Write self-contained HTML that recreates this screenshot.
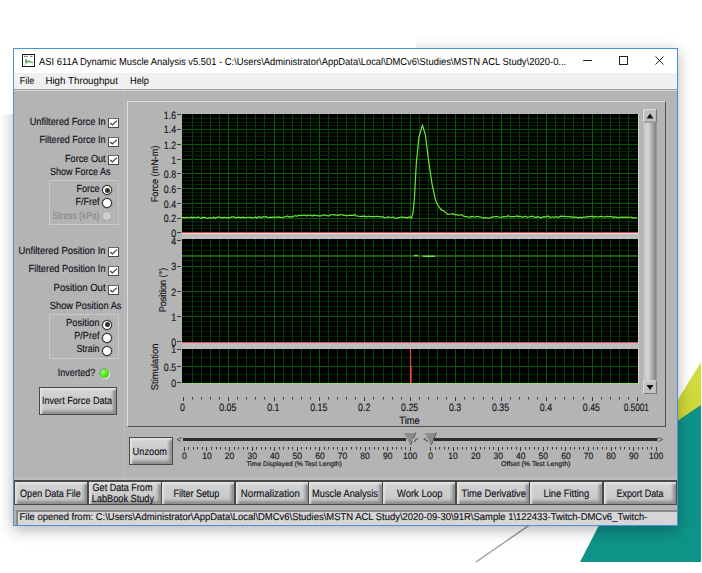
<!DOCTYPE html><html><head><meta charset="utf-8"><style>
html,body{margin:0;padding:0;}
body{width:702px;height:573px;position:relative;overflow:hidden;background:#fff;font-family:"Liberation Sans",sans-serif;color:#1a1a1a;}
.a{position:absolute;}
.t0{position:absolute;white-space:nowrap;line-height:1;text-rendering:geometricPrecision;}
.t{position:absolute;white-space:nowrap;line-height:1;text-rendering:geometricPrecision;-webkit-text-stroke:0.1px currentColor;}
.btn{position:absolute;box-sizing:border-box;border:1px solid #4a4a4a;background:linear-gradient(#d4d4d4,#c6c6c6);box-shadow:inset 2px 2px 2px #e2e2e2, inset -3px -3px 3px #8e8e8e;}
.cb{position:absolute;box-sizing:border-box;width:11px;height:10px;border:1px solid #4a4a4a;border-top-color:#6a6a6a;background:#fff;}
.rd{position:absolute;box-sizing:border-box;width:10px;height:10px;border-radius:50%;border:1px solid #2e2e2e;background:#fff;}
</style></head><body>
<svg class="a" style="left:0;top:0" width="702" height="573" viewBox="0 0 702 573">
<defs><linearGradient id="yg" x1="0" y1="0" x2="0" y2="1"><stop offset="0" stop-color="#d4dd40"/><stop offset="1" stop-color="#bed024"/></linearGradient></defs>
<polygon points="701,362 600,527 701,527" fill="url(#yg)"/>
<polygon points="701,405 640,446 580,562 701,562" fill="#0f9389"/>
<line x1="476" y1="562" x2="560" y2="504" stroke="#9a9a9a" stroke-width="1.4"/>
</svg>
<div class="a" style="left:13px;top:48px;width:665px;height:478px;box-shadow:0 4px 14px rgba(0,0,0,0.30);"></div>
<div class="a" style="left:0;top:0;width:13px;height:114px;background:#fff"></div>
<div class="a" style="left:0;top:0;width:416px;height:48px;background:#fff"></div>
<div class="a" style="left:13px;top:48px;width:665px;height:478px;box-sizing:border-box;border:1px solid #4a90da;background:#b4b4b4"></div>
<div class="a" style="left:14px;top:49px;width:663px;height:24px;background:#fff"></div>
<div class="a" style="left:14px;top:73px;width:663px;height:16px;background:#f0f0f0"></div>
<div class="a" style="left:14px;top:89px;width:663px;height:1px;background:#a2a2a2"></div>
<div class="a" style="left:14px;top:90px;width:663px;height:1px;background:#d6d6d6"></div>
<div class="a" style="left:22px;top:54px;width:13px;height:13px;box-sizing:border-box;border:1px solid #1a1a1a;background:#fff"></div>
<svg class="a" style="left:23px;top:55px" width="11" height="11"><rect x="1" y="0.8" width="1" height="1" fill="#333"/><rect x="2.7" y="0.8" width="2.3" height="1" fill="#555"/><rect x="7" y="0.8" width="2.5" height="1" fill="#666"/><rect x="2.3" y="4" width="1.5" height="4.2" fill="#2f9a3a"/><path d="M3.6 6.2 L5 6.8 L6.5 6.2 L8 7 L10 7.8" stroke="#3aa040" stroke-width="1.1" fill="none"/><path d="M1.2 10 L4 8.2" stroke="#9ad49a" stroke-width="0.8"/></svg>
<div class="a" style="left:583px;top:60px;width:9px;height:1px;background:#222"></div>
<div class="a" style="left:619px;top:56px;width:9px;height:9px;box-sizing:border-box;border:1px solid #222"></div>
<svg class="a" style="left:655px;top:56px" width="9" height="9"><path d="M0.5 0.5 L8.5 8.5 M8.5 0.5 L0.5 8.5" stroke="#222" stroke-width="1"/></svg>
<div class="a" style="left:124px;top:91px;width:1px;height:387px;background:#bdbdbd"></div>
<div class="cb" style="left:108px;top:118.0px"></div>
<svg class="a" style="left:108px;top:118.0px" width="11" height="10"><path d="M2.3 5 L4.3 7 L9 2.6" stroke="#3a3a3a" stroke-width="1.1" fill="none"/></svg>
<div class="cb" style="left:108px;top:136.8px"></div>
<svg class="a" style="left:108px;top:136.8px" width="11" height="10"><path d="M2.3 5 L4.3 7 L9 2.6" stroke="#3a3a3a" stroke-width="1.1" fill="none"/></svg>
<div class="cb" style="left:108px;top:155.2px"></div>
<svg class="a" style="left:108px;top:155.2px" width="11" height="10"><path d="M2.3 5 L4.3 7 L9 2.6" stroke="#3a3a3a" stroke-width="1.1" fill="none"/></svg>
<div class="cb" style="left:108px;top:247.2px"></div>
<svg class="a" style="left:108px;top:247.2px" width="11" height="10"><path d="M2.3 5 L4.3 7 L9 2.6" stroke="#3a3a3a" stroke-width="1.1" fill="none"/></svg>
<div class="cb" style="left:108px;top:265.9px"></div>
<svg class="a" style="left:108px;top:265.9px" width="11" height="10"><path d="M2.3 5 L4.3 7 L9 2.6" stroke="#3a3a3a" stroke-width="1.1" fill="none"/></svg>
<div class="cb" style="left:108px;top:284.6px"></div>
<svg class="a" style="left:108px;top:284.6px" width="11" height="10"><path d="M2.3 5 L4.3 7 L9 2.6" stroke="#3a3a3a" stroke-width="1.1" fill="none"/></svg>
<div class="a" style="left:49px;top:180px;width:70px;height:45px;box-sizing:border-box;border:1px solid #cacaca;border-right-color:#c4c4c4"></div>
<div class="a" style="left:49px;top:314px;width:70px;height:45px;box-sizing:border-box;border:1px solid #cacaca"></div>
<div class="rd" style="left:102px;top:185.0px;box-shadow:0 0 0 0.5px #777"></div>
<div class="a" style="left:104.5px;top:187.5px;width:5px;height:5px;border-radius:50%;background:#333"></div>
<div class="rd" style="left:102px;top:198.0px;box-shadow:0 0 0 0.5px #777"></div>
<div class="rd" style="left:102px;top:211.3px;border-color:#a8a8a8;background:#cfcfcf"></div>
<div class="rd" style="left:102px;top:319.5px;box-shadow:0 0 0 0.5px #777"></div>
<div class="a" style="left:104.5px;top:322.0px;width:5px;height:5px;border-radius:50%;background:#333"></div>
<div class="rd" style="left:102px;top:332.5px;box-shadow:0 0 0 0.5px #777"></div>
<div class="rd" style="left:102px;top:345.5px;box-shadow:0 0 0 0.5px #777"></div>
<div class="a" style="left:99.8px;top:369.4px;width:8.8px;height:8.8px;border-radius:50%;background:radial-gradient(circle at 35% 35%, #b0ff90 0%, #55f020 35%, #38c812 100%);box-shadow:-0.6px -0.6px 0.6px #777, 1px 1px 1px #eee"></div>
<div class="btn" style="left:38.5px;top:386.5px;width:78.5px;height:28.5px"></div>
<div class="a" style="left:127px;top:101px;width:539px;height:326px;box-sizing:border-box;border:1px solid #dedede;border-right-color:#4e4e4e;border-bottom-color:#4e4e4e"></div>
<svg class="a" style="left:0;top:0" width="702" height="573" viewBox="0 0 702 573"><rect x="182" y="233" width="457" height="6" fill="#bdbdbd"/><rect x="182" y="342" width="457" height="7" fill="#bdbdbd"/><rect x="182" y="114" width="456" height="119" fill="#000"/><line x1="638.5" x2="638.5" y1="114" y2="234" stroke="#d4d4d4" stroke-width="1"/><line x1="182" x2="638" y1="118.5" y2="118.5" stroke="#022402" stroke-width="1"/><line x1="182" x2="638" y1="122.5" y2="122.5" stroke="#022402" stroke-width="1"/><line x1="182" x2="638" y1="125.5" y2="125.5" stroke="#022402" stroke-width="1"/><line x1="182" x2="638" y1="129.5" y2="129.5" stroke="#055c05" stroke-width="1"/><line x1="182" x2="638" y1="132.5" y2="132.5" stroke="#022402" stroke-width="1"/><line x1="182" x2="638" y1="136.5" y2="136.5" stroke="#022402" stroke-width="1"/><line x1="182" x2="638" y1="140.5" y2="140.5" stroke="#022402" stroke-width="1"/><line x1="182" x2="638" y1="144.5" y2="144.5" stroke="#055c05" stroke-width="1"/><line x1="182" x2="638" y1="148.5" y2="148.5" stroke="#022402" stroke-width="1"/><line x1="182" x2="638" y1="151.5" y2="151.5" stroke="#022402" stroke-width="1"/><line x1="182" x2="638" y1="155.5" y2="155.5" stroke="#022402" stroke-width="1"/><line x1="182" x2="638" y1="159.5" y2="159.5" stroke="#055c05" stroke-width="1"/><line x1="182" x2="638" y1="162.5" y2="162.5" stroke="#022402" stroke-width="1"/><line x1="182" x2="638" y1="166.5" y2="166.5" stroke="#022402" stroke-width="1"/><line x1="182" x2="638" y1="169.5" y2="169.5" stroke="#022402" stroke-width="1"/><line x1="182" x2="638" y1="173.5" y2="173.5" stroke="#055c05" stroke-width="1"/><line x1="182" x2="638" y1="177.5" y2="177.5" stroke="#022402" stroke-width="1"/><line x1="182" x2="638" y1="180.5" y2="180.5" stroke="#022402" stroke-width="1"/><line x1="182" x2="638" y1="184.5" y2="184.5" stroke="#022402" stroke-width="1"/><line x1="182" x2="638" y1="188.5" y2="188.5" stroke="#055c05" stroke-width="1"/><line x1="182" x2="638" y1="192.5" y2="192.5" stroke="#022402" stroke-width="1"/><line x1="182" x2="638" y1="195.5" y2="195.5" stroke="#022402" stroke-width="1"/><line x1="182" x2="638" y1="199.5" y2="199.5" stroke="#022402" stroke-width="1"/><line x1="182" x2="638" y1="203.5" y2="203.5" stroke="#055c05" stroke-width="1"/><line x1="182" x2="638" y1="207.5" y2="207.5" stroke="#022402" stroke-width="1"/><line x1="182" x2="638" y1="210.5" y2="210.5" stroke="#022402" stroke-width="1"/><line x1="182" x2="638" y1="214.5" y2="214.5" stroke="#022402" stroke-width="1"/><line x1="182" x2="638" y1="218.5" y2="218.5" stroke="#055c05" stroke-width="1"/><line x1="182" x2="638" y1="221.5" y2="221.5" stroke="#022402" stroke-width="1"/><line x1="182" x2="638" y1="225.5" y2="225.5" stroke="#022402" stroke-width="1"/><line x1="182" x2="638" y1="228.5" y2="228.5" stroke="#022402" stroke-width="1"/><line x1="192.5" x2="192.5" y1="114" y2="233" stroke="#033e03" stroke-width="1"/><line x1="201.5" x2="201.5" y1="114" y2="233" stroke="#033e03" stroke-width="1"/><line x1="210.5" x2="210.5" y1="114" y2="233" stroke="#033e03" stroke-width="1"/><line x1="219.5" x2="219.5" y1="114" y2="233" stroke="#033e03" stroke-width="1"/><line x1="228.5" x2="228.5" y1="114" y2="233" stroke="#055c05" stroke-width="1"/><line x1="237.5" x2="237.5" y1="114" y2="233" stroke="#033e03" stroke-width="1"/><line x1="246.5" x2="246.5" y1="114" y2="233" stroke="#033e03" stroke-width="1"/><line x1="255.5" x2="255.5" y1="114" y2="233" stroke="#033e03" stroke-width="1"/><line x1="264.5" x2="264.5" y1="114" y2="233" stroke="#033e03" stroke-width="1"/><line x1="274.5" x2="274.5" y1="114" y2="233" stroke="#055c05" stroke-width="1"/><line x1="283.5" x2="283.5" y1="114" y2="233" stroke="#033e03" stroke-width="1"/><line x1="292.5" x2="292.5" y1="114" y2="233" stroke="#033e03" stroke-width="1"/><line x1="301.5" x2="301.5" y1="114" y2="233" stroke="#033e03" stroke-width="1"/><line x1="310.5" x2="310.5" y1="114" y2="233" stroke="#033e03" stroke-width="1"/><line x1="319.5" x2="319.5" y1="114" y2="233" stroke="#055c05" stroke-width="1"/><line x1="328.5" x2="328.5" y1="114" y2="233" stroke="#033e03" stroke-width="1"/><line x1="337.5" x2="337.5" y1="114" y2="233" stroke="#033e03" stroke-width="1"/><line x1="346.5" x2="346.5" y1="114" y2="233" stroke="#033e03" stroke-width="1"/><line x1="355.5" x2="355.5" y1="114" y2="233" stroke="#033e03" stroke-width="1"/><line x1="364.5" x2="364.5" y1="114" y2="233" stroke="#055c05" stroke-width="1"/><line x1="373.5" x2="373.5" y1="114" y2="233" stroke="#033e03" stroke-width="1"/><line x1="383.5" x2="383.5" y1="114" y2="233" stroke="#033e03" stroke-width="1"/><line x1="392.5" x2="392.5" y1="114" y2="233" stroke="#033e03" stroke-width="1"/><line x1="401.5" x2="401.5" y1="114" y2="233" stroke="#033e03" stroke-width="1"/><line x1="410.5" x2="410.5" y1="114" y2="233" stroke="#055c05" stroke-width="1"/><line x1="419.5" x2="419.5" y1="114" y2="233" stroke="#033e03" stroke-width="1"/><line x1="428.5" x2="428.5" y1="114" y2="233" stroke="#033e03" stroke-width="1"/><line x1="437.5" x2="437.5" y1="114" y2="233" stroke="#033e03" stroke-width="1"/><line x1="446.5" x2="446.5" y1="114" y2="233" stroke="#033e03" stroke-width="1"/><line x1="455.5" x2="455.5" y1="114" y2="233" stroke="#055c05" stroke-width="1"/><line x1="464.5" x2="464.5" y1="114" y2="233" stroke="#033e03" stroke-width="1"/><line x1="473.5" x2="473.5" y1="114" y2="233" stroke="#033e03" stroke-width="1"/><line x1="483.5" x2="483.5" y1="114" y2="233" stroke="#033e03" stroke-width="1"/><line x1="492.5" x2="492.5" y1="114" y2="233" stroke="#033e03" stroke-width="1"/><line x1="501.5" x2="501.5" y1="114" y2="233" stroke="#055c05" stroke-width="1"/><line x1="510.5" x2="510.5" y1="114" y2="233" stroke="#033e03" stroke-width="1"/><line x1="519.5" x2="519.5" y1="114" y2="233" stroke="#033e03" stroke-width="1"/><line x1="528.5" x2="528.5" y1="114" y2="233" stroke="#033e03" stroke-width="1"/><line x1="537.5" x2="537.5" y1="114" y2="233" stroke="#033e03" stroke-width="1"/><line x1="546.5" x2="546.5" y1="114" y2="233" stroke="#055c05" stroke-width="1"/><line x1="555.5" x2="555.5" y1="114" y2="233" stroke="#033e03" stroke-width="1"/><line x1="564.5" x2="564.5" y1="114" y2="233" stroke="#033e03" stroke-width="1"/><line x1="573.5" x2="573.5" y1="114" y2="233" stroke="#033e03" stroke-width="1"/><line x1="583.5" x2="583.5" y1="114" y2="233" stroke="#033e03" stroke-width="1"/><line x1="592.5" x2="592.5" y1="114" y2="233" stroke="#055c05" stroke-width="1"/><line x1="601.5" x2="601.5" y1="114" y2="233" stroke="#033e03" stroke-width="1"/><line x1="610.5" x2="610.5" y1="114" y2="233" stroke="#033e03" stroke-width="1"/><line x1="619.5" x2="619.5" y1="114" y2="233" stroke="#033e03" stroke-width="1"/><line x1="628.5" x2="628.5" y1="114" y2="233" stroke="#033e03" stroke-width="1"/><rect x="182" y="239" width="456" height="103" fill="#000"/><line x1="638.5" x2="638.5" y1="239" y2="343" stroke="#d4d4d4" stroke-width="1"/><line x1="182" x2="638" y1="245.5" y2="245.5" stroke="#022402" stroke-width="1"/><line x1="182" x2="638" y1="250.5" y2="250.5" stroke="#022402" stroke-width="1"/><line x1="182" x2="638" y1="255.5" y2="255.5" stroke="#022402" stroke-width="1"/><line x1="182" x2="638" y1="260.5" y2="260.5" stroke="#022402" stroke-width="1"/><line x1="182" x2="638" y1="266.5" y2="266.5" stroke="#055c05" stroke-width="1"/><line x1="182" x2="638" y1="271.5" y2="271.5" stroke="#022402" stroke-width="1"/><line x1="182" x2="638" y1="276.5" y2="276.5" stroke="#022402" stroke-width="1"/><line x1="182" x2="638" y1="281.5" y2="281.5" stroke="#022402" stroke-width="1"/><line x1="182" x2="638" y1="286.5" y2="286.5" stroke="#022402" stroke-width="1"/><line x1="182" x2="638" y1="291.5" y2="291.5" stroke="#055c05" stroke-width="1"/><line x1="182" x2="638" y1="296.5" y2="296.5" stroke="#022402" stroke-width="1"/><line x1="182" x2="638" y1="301.5" y2="301.5" stroke="#022402" stroke-width="1"/><line x1="182" x2="638" y1="306.5" y2="306.5" stroke="#022402" stroke-width="1"/><line x1="182" x2="638" y1="311.5" y2="311.5" stroke="#022402" stroke-width="1"/><line x1="182" x2="638" y1="316.5" y2="316.5" stroke="#055c05" stroke-width="1"/><line x1="182" x2="638" y1="321.5" y2="321.5" stroke="#022402" stroke-width="1"/><line x1="182" x2="638" y1="326.5" y2="326.5" stroke="#022402" stroke-width="1"/><line x1="182" x2="638" y1="331.5" y2="331.5" stroke="#022402" stroke-width="1"/><line x1="182" x2="638" y1="336.5" y2="336.5" stroke="#022402" stroke-width="1"/><line x1="192.5" x2="192.5" y1="239" y2="342" stroke="#033e03" stroke-width="1"/><line x1="201.5" x2="201.5" y1="239" y2="342" stroke="#033e03" stroke-width="1"/><line x1="210.5" x2="210.5" y1="239" y2="342" stroke="#033e03" stroke-width="1"/><line x1="219.5" x2="219.5" y1="239" y2="342" stroke="#033e03" stroke-width="1"/><line x1="228.5" x2="228.5" y1="239" y2="342" stroke="#055c05" stroke-width="1"/><line x1="237.5" x2="237.5" y1="239" y2="342" stroke="#033e03" stroke-width="1"/><line x1="246.5" x2="246.5" y1="239" y2="342" stroke="#033e03" stroke-width="1"/><line x1="255.5" x2="255.5" y1="239" y2="342" stroke="#033e03" stroke-width="1"/><line x1="264.5" x2="264.5" y1="239" y2="342" stroke="#033e03" stroke-width="1"/><line x1="274.5" x2="274.5" y1="239" y2="342" stroke="#055c05" stroke-width="1"/><line x1="283.5" x2="283.5" y1="239" y2="342" stroke="#033e03" stroke-width="1"/><line x1="292.5" x2="292.5" y1="239" y2="342" stroke="#033e03" stroke-width="1"/><line x1="301.5" x2="301.5" y1="239" y2="342" stroke="#033e03" stroke-width="1"/><line x1="310.5" x2="310.5" y1="239" y2="342" stroke="#033e03" stroke-width="1"/><line x1="319.5" x2="319.5" y1="239" y2="342" stroke="#055c05" stroke-width="1"/><line x1="328.5" x2="328.5" y1="239" y2="342" stroke="#033e03" stroke-width="1"/><line x1="337.5" x2="337.5" y1="239" y2="342" stroke="#033e03" stroke-width="1"/><line x1="346.5" x2="346.5" y1="239" y2="342" stroke="#033e03" stroke-width="1"/><line x1="355.5" x2="355.5" y1="239" y2="342" stroke="#033e03" stroke-width="1"/><line x1="364.5" x2="364.5" y1="239" y2="342" stroke="#055c05" stroke-width="1"/><line x1="373.5" x2="373.5" y1="239" y2="342" stroke="#033e03" stroke-width="1"/><line x1="383.5" x2="383.5" y1="239" y2="342" stroke="#033e03" stroke-width="1"/><line x1="392.5" x2="392.5" y1="239" y2="342" stroke="#033e03" stroke-width="1"/><line x1="401.5" x2="401.5" y1="239" y2="342" stroke="#033e03" stroke-width="1"/><line x1="410.5" x2="410.5" y1="239" y2="342" stroke="#055c05" stroke-width="1"/><line x1="419.5" x2="419.5" y1="239" y2="342" stroke="#033e03" stroke-width="1"/><line x1="428.5" x2="428.5" y1="239" y2="342" stroke="#033e03" stroke-width="1"/><line x1="437.5" x2="437.5" y1="239" y2="342" stroke="#033e03" stroke-width="1"/><line x1="446.5" x2="446.5" y1="239" y2="342" stroke="#033e03" stroke-width="1"/><line x1="455.5" x2="455.5" y1="239" y2="342" stroke="#055c05" stroke-width="1"/><line x1="464.5" x2="464.5" y1="239" y2="342" stroke="#033e03" stroke-width="1"/><line x1="473.5" x2="473.5" y1="239" y2="342" stroke="#033e03" stroke-width="1"/><line x1="483.5" x2="483.5" y1="239" y2="342" stroke="#033e03" stroke-width="1"/><line x1="492.5" x2="492.5" y1="239" y2="342" stroke="#033e03" stroke-width="1"/><line x1="501.5" x2="501.5" y1="239" y2="342" stroke="#055c05" stroke-width="1"/><line x1="510.5" x2="510.5" y1="239" y2="342" stroke="#033e03" stroke-width="1"/><line x1="519.5" x2="519.5" y1="239" y2="342" stroke="#033e03" stroke-width="1"/><line x1="528.5" x2="528.5" y1="239" y2="342" stroke="#033e03" stroke-width="1"/><line x1="537.5" x2="537.5" y1="239" y2="342" stroke="#033e03" stroke-width="1"/><line x1="546.5" x2="546.5" y1="239" y2="342" stroke="#055c05" stroke-width="1"/><line x1="555.5" x2="555.5" y1="239" y2="342" stroke="#033e03" stroke-width="1"/><line x1="564.5" x2="564.5" y1="239" y2="342" stroke="#033e03" stroke-width="1"/><line x1="573.5" x2="573.5" y1="239" y2="342" stroke="#033e03" stroke-width="1"/><line x1="583.5" x2="583.5" y1="239" y2="342" stroke="#033e03" stroke-width="1"/><line x1="592.5" x2="592.5" y1="239" y2="342" stroke="#055c05" stroke-width="1"/><line x1="601.5" x2="601.5" y1="239" y2="342" stroke="#033e03" stroke-width="1"/><line x1="610.5" x2="610.5" y1="239" y2="342" stroke="#033e03" stroke-width="1"/><line x1="619.5" x2="619.5" y1="239" y2="342" stroke="#033e03" stroke-width="1"/><line x1="628.5" x2="628.5" y1="239" y2="342" stroke="#033e03" stroke-width="1"/><rect x="182" y="349" width="456" height="34" fill="#000"/><line x1="638.5" x2="638.5" y1="349" y2="384" stroke="#d4d4d4" stroke-width="1"/><line x1="182" x2="638" y1="357.5" y2="357.5" stroke="#022402" stroke-width="1"/><line x1="182" x2="638" y1="366.5" y2="366.5" stroke="#055c05" stroke-width="1"/><line x1="182" x2="638" y1="374.5" y2="374.5" stroke="#022402" stroke-width="1"/><line x1="192.5" x2="192.5" y1="349" y2="383" stroke="#033e03" stroke-width="1"/><line x1="201.5" x2="201.5" y1="349" y2="383" stroke="#033e03" stroke-width="1"/><line x1="210.5" x2="210.5" y1="349" y2="383" stroke="#033e03" stroke-width="1"/><line x1="219.5" x2="219.5" y1="349" y2="383" stroke="#033e03" stroke-width="1"/><line x1="228.5" x2="228.5" y1="349" y2="383" stroke="#055c05" stroke-width="1"/><line x1="237.5" x2="237.5" y1="349" y2="383" stroke="#033e03" stroke-width="1"/><line x1="246.5" x2="246.5" y1="349" y2="383" stroke="#033e03" stroke-width="1"/><line x1="255.5" x2="255.5" y1="349" y2="383" stroke="#033e03" stroke-width="1"/><line x1="264.5" x2="264.5" y1="349" y2="383" stroke="#033e03" stroke-width="1"/><line x1="274.5" x2="274.5" y1="349" y2="383" stroke="#055c05" stroke-width="1"/><line x1="283.5" x2="283.5" y1="349" y2="383" stroke="#033e03" stroke-width="1"/><line x1="292.5" x2="292.5" y1="349" y2="383" stroke="#033e03" stroke-width="1"/><line x1="301.5" x2="301.5" y1="349" y2="383" stroke="#033e03" stroke-width="1"/><line x1="310.5" x2="310.5" y1="349" y2="383" stroke="#033e03" stroke-width="1"/><line x1="319.5" x2="319.5" y1="349" y2="383" stroke="#055c05" stroke-width="1"/><line x1="328.5" x2="328.5" y1="349" y2="383" stroke="#033e03" stroke-width="1"/><line x1="337.5" x2="337.5" y1="349" y2="383" stroke="#033e03" stroke-width="1"/><line x1="346.5" x2="346.5" y1="349" y2="383" stroke="#033e03" stroke-width="1"/><line x1="355.5" x2="355.5" y1="349" y2="383" stroke="#033e03" stroke-width="1"/><line x1="364.5" x2="364.5" y1="349" y2="383" stroke="#055c05" stroke-width="1"/><line x1="373.5" x2="373.5" y1="349" y2="383" stroke="#033e03" stroke-width="1"/><line x1="383.5" x2="383.5" y1="349" y2="383" stroke="#033e03" stroke-width="1"/><line x1="392.5" x2="392.5" y1="349" y2="383" stroke="#033e03" stroke-width="1"/><line x1="401.5" x2="401.5" y1="349" y2="383" stroke="#033e03" stroke-width="1"/><line x1="410.5" x2="410.5" y1="349" y2="383" stroke="#055c05" stroke-width="1"/><line x1="419.5" x2="419.5" y1="349" y2="383" stroke="#033e03" stroke-width="1"/><line x1="428.5" x2="428.5" y1="349" y2="383" stroke="#033e03" stroke-width="1"/><line x1="437.5" x2="437.5" y1="349" y2="383" stroke="#033e03" stroke-width="1"/><line x1="446.5" x2="446.5" y1="349" y2="383" stroke="#033e03" stroke-width="1"/><line x1="455.5" x2="455.5" y1="349" y2="383" stroke="#055c05" stroke-width="1"/><line x1="464.5" x2="464.5" y1="349" y2="383" stroke="#033e03" stroke-width="1"/><line x1="473.5" x2="473.5" y1="349" y2="383" stroke="#033e03" stroke-width="1"/><line x1="483.5" x2="483.5" y1="349" y2="383" stroke="#033e03" stroke-width="1"/><line x1="492.5" x2="492.5" y1="349" y2="383" stroke="#033e03" stroke-width="1"/><line x1="501.5" x2="501.5" y1="349" y2="383" stroke="#055c05" stroke-width="1"/><line x1="510.5" x2="510.5" y1="349" y2="383" stroke="#033e03" stroke-width="1"/><line x1="519.5" x2="519.5" y1="349" y2="383" stroke="#033e03" stroke-width="1"/><line x1="528.5" x2="528.5" y1="349" y2="383" stroke="#033e03" stroke-width="1"/><line x1="537.5" x2="537.5" y1="349" y2="383" stroke="#033e03" stroke-width="1"/><line x1="546.5" x2="546.5" y1="349" y2="383" stroke="#055c05" stroke-width="1"/><line x1="555.5" x2="555.5" y1="349" y2="383" stroke="#033e03" stroke-width="1"/><line x1="564.5" x2="564.5" y1="349" y2="383" stroke="#033e03" stroke-width="1"/><line x1="573.5" x2="573.5" y1="349" y2="383" stroke="#033e03" stroke-width="1"/><line x1="583.5" x2="583.5" y1="349" y2="383" stroke="#033e03" stroke-width="1"/><line x1="592.5" x2="592.5" y1="349" y2="383" stroke="#055c05" stroke-width="1"/><line x1="601.5" x2="601.5" y1="349" y2="383" stroke="#033e03" stroke-width="1"/><line x1="610.5" x2="610.5" y1="349" y2="383" stroke="#033e03" stroke-width="1"/><line x1="619.5" x2="619.5" y1="349" y2="383" stroke="#033e03" stroke-width="1"/><line x1="628.5" x2="628.5" y1="349" y2="383" stroke="#033e03" stroke-width="1"/><line x1="182" x2="638" y1="232.5" y2="232.5" stroke="#d84040" stroke-width="1"/><line x1="182" x2="638" y1="233.5" y2="233.5" stroke="#e8dede" stroke-width="1"/><line x1="182" x2="638" y1="342.5" y2="342.5" stroke="#e05050" stroke-width="1"/><line x1="182" x2="638" y1="383.5" y2="383.5" stroke="#8fe060" stroke-width="1.2"/><line x1="182" x2="638" y1="255.9" y2="255.9" stroke="#2a7612" stroke-width="1.5"/><path d="M414 255.5 L418 255.5 M423 256.3 L435 256.3" stroke="#5ee03a" stroke-width="1.4" fill="none"/><path d="M410.5 349 L410.5 383" stroke="#e04848" stroke-width="1.2"/><path d="M410.8 366 L410.8 383" stroke="#e85050" stroke-width="1.6"/><polyline points="182.0,217.65 183.5,217.40 185.0,218.09 186.5,217.27 188.0,217.91 189.5,217.67 191.0,217.22 192.5,217.84 194.0,217.18 195.5,217.72 197.0,217.20 198.5,217.22 200.0,217.68 201.5,218.24 203.0,217.24 204.5,217.37 206.0,217.93 207.5,218.37 209.0,217.84 210.5,217.58 212.0,218.38 213.5,217.07 215.0,218.20 216.5,217.39 218.0,217.18 219.5,217.13 221.0,217.39 222.5,218.09 224.0,217.19 225.5,217.74 227.0,217.81 228.5,217.43 230.0,217.67 231.5,216.97 233.0,216.95 234.5,217.14 236.0,217.78 237.5,217.41 239.0,217.23 240.5,217.60 242.0,217.39 243.5,217.16 245.0,217.84 246.5,217.68 248.0,217.03 249.5,217.47 251.0,217.39 252.5,217.86 254.0,217.64 255.5,217.00 257.0,217.95 258.5,216.73 260.0,217.13 261.5,217.59 263.0,216.72 264.5,217.18 266.0,216.53 267.5,217.39 269.0,217.51 270.5,217.23 272.0,217.63 273.5,216.83 275.0,217.34 276.5,217.19 278.0,217.15 279.5,216.96 281.0,217.48 282.5,217.53 284.0,216.77 285.5,216.95 287.0,216.01 288.5,216.81 290.0,216.64 291.5,217.03 293.0,216.69 294.5,215.85 296.0,215.89 297.5,216.19 299.0,215.19 300.5,215.74 302.0,215.30 303.5,215.19 305.0,215.08 306.5,216.05 308.0,215.12 309.5,215.26 311.0,215.43 312.5,216.07 314.0,214.93 315.5,215.42 317.0,215.53 318.5,215.97 320.0,215.85 321.5,215.88 323.0,215.03 324.5,215.19 326.0,215.08 327.5,215.79 329.0,215.86 330.5,214.71 332.0,214.75 333.5,214.82 335.0,214.83 336.5,215.18 338.0,215.32 339.5,214.87 341.0,214.51 342.5,215.09 344.0,215.02 345.5,215.29 347.0,215.83 348.5,215.47 350.0,215.22 351.5,215.36 353.0,215.45 354.5,214.58 356.0,215.92 357.5,215.99 359.0,216.36 360.5,216.50 362.0,216.17 363.5,216.42 365.0,216.24 366.5,217.03 368.0,216.27 369.5,216.31 371.0,216.55 372.5,216.53 374.0,216.82 375.5,216.45 377.0,216.42 378.5,216.67 380.0,216.64 381.5,217.05 383.0,216.62 384.5,217.84 386.0,217.52 387.5,216.91 389.0,217.09 390.5,217.27 392.0,217.33 393.5,217.03 395.0,218.09 396.5,218.29 398.0,217.55 399.5,217.58 401.0,217.02 402.5,217.04 404.0,217.38 405.5,217.27 407.0,218.06 408.5,217.13 410.0,216.93 411.5,218.23 413.0,212.80 413.5,208.00 414.0,202.50 414.5,197.00 415.0,187.56 415.5,178.11 416.0,168.67 416.5,161.07 417.0,156.26 417.5,151.44 418.0,146.63 418.5,141.81 419.0,137.00 419.5,135.24 420.0,133.47 420.5,131.71 421.0,129.94 421.5,128.18 422.0,126.41 422.5,125.33 423.0,127.00 423.5,128.67 424.0,130.33 424.5,132.00 425.0,133.67 425.5,135.79 426.0,139.76 426.5,143.74 427.0,147.71 427.5,151.68 428.0,155.65 428.5,159.62 429.0,163.35 429.5,166.74 430.0,170.12 430.5,173.50 431.0,176.88 431.5,180.26 432.0,183.65 432.5,186.37 433.0,188.65 433.5,190.93 434.0,193.21 434.5,195.49 435.0,197.76 435.5,200.04 436.0,201.33 436.5,202.37 437.0,203.42 437.5,204.46 438.0,205.50 438.5,206.17 439.0,206.84 439.5,207.52 440.0,208.19 440.5,208.86 441.0,209.57 441.5,209.48 442.0,210.33 443.5,210.49 445.0,212.07 446.5,213.59 448.0,214.31 449.5,214.23 451.0,213.77 452.5,214.08 454.0,213.95 455.5,214.95 457.0,214.77 458.5,215.27 460.0,214.80 461.5,214.80 463.0,215.90 464.5,216.43 466.0,216.53 467.5,216.75 469.0,217.06 470.5,217.16 472.0,216.51 473.5,216.99 475.0,216.83 476.5,216.45 478.0,216.52 479.5,216.94 481.0,216.98 482.5,217.66 484.0,218.10 485.5,217.46 487.0,218.21 488.5,218.19 490.0,218.05 491.5,217.14 493.0,216.84 494.5,216.76 496.0,216.63 497.5,216.55 499.0,217.04 500.5,217.34 502.0,217.16 503.5,216.57 505.0,216.72 506.5,216.83 508.0,215.74 509.5,216.46 511.0,216.80 512.5,216.66 514.0,216.66 515.5,216.32 517.0,215.94 518.5,216.83 520.0,216.23 521.5,216.93 523.0,217.21 524.5,216.44 526.0,216.49 527.5,217.29 529.0,217.02 530.5,216.28 532.0,216.26 533.5,216.34 535.0,217.43 536.5,217.34 538.0,216.45 539.5,217.44 541.0,217.65 542.5,217.17 544.0,216.71 545.5,216.96 547.0,216.34 548.5,216.15 550.0,217.46 551.5,216.98 553.0,216.78 554.5,217.32 556.0,216.59 557.5,217.17 559.0,217.08 560.5,216.21 562.0,216.32 563.5,216.43 565.0,216.41 566.5,216.95 568.0,216.54 569.5,216.82 571.0,216.47 572.5,217.61 574.0,216.89 575.5,217.08 577.0,217.31 578.5,217.81 580.0,217.19 581.5,217.83 583.0,217.20 584.5,217.19 586.0,217.12 587.5,216.36 589.0,216.90 590.5,216.49 592.0,216.19 593.5,217.25 595.0,216.32 596.5,216.69 598.0,216.99 599.5,216.70 601.0,216.38 602.5,216.69 604.0,216.78 605.5,217.14 607.0,216.22 608.5,216.90 610.0,216.50 611.5,216.58 613.0,217.31 614.5,216.97 616.0,217.09 617.5,217.40 619.0,217.65 620.5,217.03 622.0,217.28 623.5,217.15 625.0,217.17 626.5,217.44 628.0,217.12 629.5,217.25 631.0,217.19 632.5,217.86 634.0,217.53 635.5,217.80 637.0,217.91" fill="none" stroke="#72e63c" stroke-width="1.2"/><line x1="177" x2="181" y1="114.5" y2="114.5" stroke="#3a3a3a" stroke-width="1"/><line x1="177" x2="181" y1="129.5" y2="129.5" stroke="#3a3a3a" stroke-width="1"/><line x1="177" x2="181" y1="144.5" y2="144.5" stroke="#3a3a3a" stroke-width="1"/><line x1="177" x2="181" y1="159.5" y2="159.5" stroke="#3a3a3a" stroke-width="1"/><line x1="177" x2="181" y1="173.5" y2="173.5" stroke="#3a3a3a" stroke-width="1"/><line x1="177" x2="181" y1="188.5" y2="188.5" stroke="#3a3a3a" stroke-width="1"/><line x1="177" x2="181" y1="203.5" y2="203.5" stroke="#3a3a3a" stroke-width="1"/><line x1="177" x2="181" y1="218.5" y2="218.5" stroke="#3a3a3a" stroke-width="1"/><line x1="177" x2="181" y1="232.5" y2="232.5" stroke="#3a3a3a" stroke-width="1"/><line x1="177" x2="181" y1="240.5" y2="240.5" stroke="#3a3a3a" stroke-width="1"/><line x1="177" x2="181" y1="266.5" y2="266.5" stroke="#3a3a3a" stroke-width="1"/><line x1="177" x2="181" y1="291.5" y2="291.5" stroke="#3a3a3a" stroke-width="1"/><line x1="177" x2="181" y1="316.5" y2="316.5" stroke="#3a3a3a" stroke-width="1"/><line x1="177" x2="181" y1="341.5" y2="341.5" stroke="#3a3a3a" stroke-width="1"/><line x1="177" x2="181" y1="349.5" y2="349.5" stroke="#3a3a3a" stroke-width="1"/><line x1="177" x2="181" y1="366.5" y2="366.5" stroke="#3a3a3a" stroke-width="1"/><line x1="177" x2="181" y1="382.5" y2="382.5" stroke="#3a3a3a" stroke-width="1"/><line x1="183.5" x2="183.5" y1="397" y2="401.0" stroke="#3a3a3a" stroke-width="1"/><line x1="192.5" x2="192.5" y1="397" y2="399.5" stroke="#3a3a3a" stroke-width="1"/><line x1="201.5" x2="201.5" y1="397" y2="399.5" stroke="#3a3a3a" stroke-width="1"/><line x1="210.5" x2="210.5" y1="397" y2="399.5" stroke="#3a3a3a" stroke-width="1"/><line x1="219.5" x2="219.5" y1="397" y2="399.5" stroke="#3a3a3a" stroke-width="1"/><line x1="228.5" x2="228.5" y1="397" y2="401.0" stroke="#3a3a3a" stroke-width="1"/><line x1="237.5" x2="237.5" y1="397" y2="399.5" stroke="#3a3a3a" stroke-width="1"/><line x1="246.5" x2="246.5" y1="397" y2="399.5" stroke="#3a3a3a" stroke-width="1"/><line x1="255.5" x2="255.5" y1="397" y2="399.5" stroke="#3a3a3a" stroke-width="1"/><line x1="264.5" x2="264.5" y1="397" y2="399.5" stroke="#3a3a3a" stroke-width="1"/><line x1="274.5" x2="274.5" y1="397" y2="401.0" stroke="#3a3a3a" stroke-width="1"/><line x1="283.5" x2="283.5" y1="397" y2="399.5" stroke="#3a3a3a" stroke-width="1"/><line x1="292.5" x2="292.5" y1="397" y2="399.5" stroke="#3a3a3a" stroke-width="1"/><line x1="301.5" x2="301.5" y1="397" y2="399.5" stroke="#3a3a3a" stroke-width="1"/><line x1="310.5" x2="310.5" y1="397" y2="399.5" stroke="#3a3a3a" stroke-width="1"/><line x1="319.5" x2="319.5" y1="397" y2="401.0" stroke="#3a3a3a" stroke-width="1"/><line x1="328.5" x2="328.5" y1="397" y2="399.5" stroke="#3a3a3a" stroke-width="1"/><line x1="337.5" x2="337.5" y1="397" y2="399.5" stroke="#3a3a3a" stroke-width="1"/><line x1="346.5" x2="346.5" y1="397" y2="399.5" stroke="#3a3a3a" stroke-width="1"/><line x1="355.5" x2="355.5" y1="397" y2="399.5" stroke="#3a3a3a" stroke-width="1"/><line x1="364.5" x2="364.5" y1="397" y2="401.0" stroke="#3a3a3a" stroke-width="1"/><line x1="373.5" x2="373.5" y1="397" y2="399.5" stroke="#3a3a3a" stroke-width="1"/><line x1="383.5" x2="383.5" y1="397" y2="399.5" stroke="#3a3a3a" stroke-width="1"/><line x1="392.5" x2="392.5" y1="397" y2="399.5" stroke="#3a3a3a" stroke-width="1"/><line x1="401.5" x2="401.5" y1="397" y2="399.5" stroke="#3a3a3a" stroke-width="1"/><line x1="410.5" x2="410.5" y1="397" y2="401.0" stroke="#3a3a3a" stroke-width="1"/><line x1="419.5" x2="419.5" y1="397" y2="399.5" stroke="#3a3a3a" stroke-width="1"/><line x1="428.5" x2="428.5" y1="397" y2="399.5" stroke="#3a3a3a" stroke-width="1"/><line x1="437.5" x2="437.5" y1="397" y2="399.5" stroke="#3a3a3a" stroke-width="1"/><line x1="446.5" x2="446.5" y1="397" y2="399.5" stroke="#3a3a3a" stroke-width="1"/><line x1="455.5" x2="455.5" y1="397" y2="401.0" stroke="#3a3a3a" stroke-width="1"/><line x1="464.5" x2="464.5" y1="397" y2="399.5" stroke="#3a3a3a" stroke-width="1"/><line x1="473.5" x2="473.5" y1="397" y2="399.5" stroke="#3a3a3a" stroke-width="1"/><line x1="483.5" x2="483.5" y1="397" y2="399.5" stroke="#3a3a3a" stroke-width="1"/><line x1="492.5" x2="492.5" y1="397" y2="399.5" stroke="#3a3a3a" stroke-width="1"/><line x1="501.5" x2="501.5" y1="397" y2="401.0" stroke="#3a3a3a" stroke-width="1"/><line x1="510.5" x2="510.5" y1="397" y2="399.5" stroke="#3a3a3a" stroke-width="1"/><line x1="519.5" x2="519.5" y1="397" y2="399.5" stroke="#3a3a3a" stroke-width="1"/><line x1="528.5" x2="528.5" y1="397" y2="399.5" stroke="#3a3a3a" stroke-width="1"/><line x1="537.5" x2="537.5" y1="397" y2="399.5" stroke="#3a3a3a" stroke-width="1"/><line x1="546.5" x2="546.5" y1="397" y2="401.0" stroke="#3a3a3a" stroke-width="1"/><line x1="555.5" x2="555.5" y1="397" y2="399.5" stroke="#3a3a3a" stroke-width="1"/><line x1="564.5" x2="564.5" y1="397" y2="399.5" stroke="#3a3a3a" stroke-width="1"/><line x1="573.5" x2="573.5" y1="397" y2="399.5" stroke="#3a3a3a" stroke-width="1"/><line x1="583.5" x2="583.5" y1="397" y2="399.5" stroke="#3a3a3a" stroke-width="1"/><line x1="592.5" x2="592.5" y1="397" y2="401.0" stroke="#3a3a3a" stroke-width="1"/><line x1="601.5" x2="601.5" y1="397" y2="399.5" stroke="#3a3a3a" stroke-width="1"/><line x1="610.5" x2="610.5" y1="397" y2="399.5" stroke="#3a3a3a" stroke-width="1"/><line x1="619.5" x2="619.5" y1="397" y2="399.5" stroke="#3a3a3a" stroke-width="1"/><line x1="628.5" x2="628.5" y1="397" y2="399.5" stroke="#3a3a3a" stroke-width="1"/><line x1="637.5" x2="637.5" y1="397" y2="401.0" stroke="#3a3a3a" stroke-width="1"/><defs><linearGradient id="sc" x1="0" y1="0" x2="1" y2="0"><stop offset="0" stop-color="#c4c4c4"/><stop offset="0.35" stop-color="#d6d6d6"/><stop offset="1" stop-color="#7c7c7c"/></linearGradient></defs><rect x="643.5" y="122.5" width="13" height="258" fill="url(#sc)"/><rect x="643.5" y="109.5" width="13" height="13" fill="#c2c2c2"/><path d="M643.5 122.5 v-13 h13" fill="none" stroke="#dedede" stroke-width="1"/><path d="M644 122.0 h12.5 v-12.5" fill="none" stroke="#7a7a7a" stroke-width="1.2"/><polygon points="646.5,118.5 653.5,118.5 650,113.5" fill="#111"/><rect x="643.5" y="381.0" width="13" height="13" fill="#c2c2c2"/><path d="M643.5 394.0 v-13 h13" fill="none" stroke="#dedede" stroke-width="1"/><path d="M644 393.5 h12.5 v-12.5" fill="none" stroke="#7a7a7a" stroke-width="1.2"/><polygon points="646.5,385.0 653.5,385.0 650,390.0" fill="#111"/><rect x="183.0" y="438" width="223.0" height="3" fill="#2c2c2c"/><polygon points="404.2,433 415.4,433 410.2,445" fill="#8c8c8c"/><line x1="415.8" y1="432.5" x2="410.5" y2="445" stroke="#3c3c3c" stroke-width="0.8"/><rect x="434.0" y="438" width="223.5" height="3" fill="#2c2c2c"/><polygon points="424.9,433 436.1,433 430.9,445" fill="#8c8c8c"/><line x1="436.5" y1="432.5" x2="431.2" y2="445" stroke="#3c3c3c" stroke-width="0.8"/><path d="M177 439.5 L182 437.5 M177 439.5 L181 441.5" fill="none" stroke="#444" stroke-width="0.8"/><path d="M413 441 L418 438.5 M413.5 440.5 L416 441.5" fill="none" stroke="#3a3a3a" stroke-width="0.9"/><circle cx="413.3" cy="440" r="1" fill="#e8e8e8"/><path d="M423.5 439 L428 441.5 M424 439.5 L426 438" fill="none" stroke="#3a3a3a" stroke-width="0.9"/><path d="M658 437.5 L663 439.5 M658.5 441.5 L663 439.5" fill="none" stroke="#444" stroke-width="0.8"/><line x1="184.5" x2="184.5" y1="447" y2="451.0" stroke="#3a3a3a" stroke-width="1"/><line x1="188.5" x2="188.5" y1="447" y2="449.5" stroke="#3a3a3a" stroke-width="1"/><line x1="193.5" x2="193.5" y1="447" y2="449.5" stroke="#3a3a3a" stroke-width="1"/><line x1="197.5" x2="197.5" y1="447" y2="449.5" stroke="#3a3a3a" stroke-width="1"/><line x1="202.5" x2="202.5" y1="447" y2="449.5" stroke="#3a3a3a" stroke-width="1"/><line x1="206.5" x2="206.5" y1="447" y2="451.0" stroke="#3a3a3a" stroke-width="1"/><line x1="211.5" x2="211.5" y1="447" y2="449.5" stroke="#3a3a3a" stroke-width="1"/><line x1="216.5" x2="216.5" y1="447" y2="449.5" stroke="#3a3a3a" stroke-width="1"/><line x1="220.5" x2="220.5" y1="447" y2="449.5" stroke="#3a3a3a" stroke-width="1"/><line x1="225.5" x2="225.5" y1="447" y2="449.5" stroke="#3a3a3a" stroke-width="1"/><line x1="229.5" x2="229.5" y1="447" y2="451.0" stroke="#3a3a3a" stroke-width="1"/><line x1="234.5" x2="234.5" y1="447" y2="449.5" stroke="#3a3a3a" stroke-width="1"/><line x1="238.5" x2="238.5" y1="447" y2="449.5" stroke="#3a3a3a" stroke-width="1"/><line x1="243.5" x2="243.5" y1="447" y2="449.5" stroke="#3a3a3a" stroke-width="1"/><line x1="247.5" x2="247.5" y1="447" y2="449.5" stroke="#3a3a3a" stroke-width="1"/><line x1="252.5" x2="252.5" y1="447" y2="451.0" stroke="#3a3a3a" stroke-width="1"/><line x1="256.5" x2="256.5" y1="447" y2="449.5" stroke="#3a3a3a" stroke-width="1"/><line x1="261.5" x2="261.5" y1="447" y2="449.5" stroke="#3a3a3a" stroke-width="1"/><line x1="265.5" x2="265.5" y1="447" y2="449.5" stroke="#3a3a3a" stroke-width="1"/><line x1="270.5" x2="270.5" y1="447" y2="449.5" stroke="#3a3a3a" stroke-width="1"/><line x1="274.5" x2="274.5" y1="447" y2="451.0" stroke="#3a3a3a" stroke-width="1"/><line x1="279.5" x2="279.5" y1="447" y2="449.5" stroke="#3a3a3a" stroke-width="1"/><line x1="283.5" x2="283.5" y1="447" y2="449.5" stroke="#3a3a3a" stroke-width="1"/><line x1="288.5" x2="288.5" y1="447" y2="449.5" stroke="#3a3a3a" stroke-width="1"/><line x1="292.5" x2="292.5" y1="447" y2="449.5" stroke="#3a3a3a" stroke-width="1"/><line x1="297.5" x2="297.5" y1="447" y2="451.0" stroke="#3a3a3a" stroke-width="1"/><line x1="301.5" x2="301.5" y1="447" y2="449.5" stroke="#3a3a3a" stroke-width="1"/><line x1="306.5" x2="306.5" y1="447" y2="449.5" stroke="#3a3a3a" stroke-width="1"/><line x1="310.5" x2="310.5" y1="447" y2="449.5" stroke="#3a3a3a" stroke-width="1"/><line x1="315.5" x2="315.5" y1="447" y2="449.5" stroke="#3a3a3a" stroke-width="1"/><line x1="319.5" x2="319.5" y1="447" y2="451.0" stroke="#3a3a3a" stroke-width="1"/><line x1="324.5" x2="324.5" y1="447" y2="449.5" stroke="#3a3a3a" stroke-width="1"/><line x1="328.5" x2="328.5" y1="447" y2="449.5" stroke="#3a3a3a" stroke-width="1"/><line x1="333.5" x2="333.5" y1="447" y2="449.5" stroke="#3a3a3a" stroke-width="1"/><line x1="337.5" x2="337.5" y1="447" y2="449.5" stroke="#3a3a3a" stroke-width="1"/><line x1="342.5" x2="342.5" y1="447" y2="451.0" stroke="#3a3a3a" stroke-width="1"/><line x1="346.5" x2="346.5" y1="447" y2="449.5" stroke="#3a3a3a" stroke-width="1"/><line x1="351.5" x2="351.5" y1="447" y2="449.5" stroke="#3a3a3a" stroke-width="1"/><line x1="356.5" x2="356.5" y1="447" y2="449.5" stroke="#3a3a3a" stroke-width="1"/><line x1="360.5" x2="360.5" y1="447" y2="449.5" stroke="#3a3a3a" stroke-width="1"/><line x1="365.5" x2="365.5" y1="447" y2="451.0" stroke="#3a3a3a" stroke-width="1"/><line x1="369.5" x2="369.5" y1="447" y2="449.5" stroke="#3a3a3a" stroke-width="1"/><line x1="374.5" x2="374.5" y1="447" y2="449.5" stroke="#3a3a3a" stroke-width="1"/><line x1="378.5" x2="378.5" y1="447" y2="449.5" stroke="#3a3a3a" stroke-width="1"/><line x1="383.5" x2="383.5" y1="447" y2="449.5" stroke="#3a3a3a" stroke-width="1"/><line x1="387.5" x2="387.5" y1="447" y2="451.0" stroke="#3a3a3a" stroke-width="1"/><line x1="392.5" x2="392.5" y1="447" y2="449.5" stroke="#3a3a3a" stroke-width="1"/><line x1="396.5" x2="396.5" y1="447" y2="449.5" stroke="#3a3a3a" stroke-width="1"/><line x1="401.5" x2="401.5" y1="447" y2="449.5" stroke="#3a3a3a" stroke-width="1"/><line x1="405.5" x2="405.5" y1="447" y2="449.5" stroke="#3a3a3a" stroke-width="1"/><line x1="410.5" x2="410.5" y1="447" y2="451.0" stroke="#3a3a3a" stroke-width="1"/><line x1="430.5" x2="430.5" y1="447" y2="451.0" stroke="#3a3a3a" stroke-width="1"/><line x1="435.5" x2="435.5" y1="447" y2="449.5" stroke="#3a3a3a" stroke-width="1"/><line x1="439.5" x2="439.5" y1="447" y2="449.5" stroke="#3a3a3a" stroke-width="1"/><line x1="444.5" x2="444.5" y1="447" y2="449.5" stroke="#3a3a3a" stroke-width="1"/><line x1="448.5" x2="448.5" y1="447" y2="449.5" stroke="#3a3a3a" stroke-width="1"/><line x1="453.5" x2="453.5" y1="447" y2="451.0" stroke="#3a3a3a" stroke-width="1"/><line x1="457.5" x2="457.5" y1="447" y2="449.5" stroke="#3a3a3a" stroke-width="1"/><line x1="462.5" x2="462.5" y1="447" y2="449.5" stroke="#3a3a3a" stroke-width="1"/><line x1="466.5" x2="466.5" y1="447" y2="449.5" stroke="#3a3a3a" stroke-width="1"/><line x1="471.5" x2="471.5" y1="447" y2="449.5" stroke="#3a3a3a" stroke-width="1"/><line x1="475.5" x2="475.5" y1="447" y2="451.0" stroke="#3a3a3a" stroke-width="1"/><line x1="480.5" x2="480.5" y1="447" y2="449.5" stroke="#3a3a3a" stroke-width="1"/><line x1="484.5" x2="484.5" y1="447" y2="449.5" stroke="#3a3a3a" stroke-width="1"/><line x1="489.5" x2="489.5" y1="447" y2="449.5" stroke="#3a3a3a" stroke-width="1"/><line x1="493.5" x2="493.5" y1="447" y2="449.5" stroke="#3a3a3a" stroke-width="1"/><line x1="498.5" x2="498.5" y1="447" y2="451.0" stroke="#3a3a3a" stroke-width="1"/><line x1="502.5" x2="502.5" y1="447" y2="449.5" stroke="#3a3a3a" stroke-width="1"/><line x1="507.5" x2="507.5" y1="447" y2="449.5" stroke="#3a3a3a" stroke-width="1"/><line x1="511.5" x2="511.5" y1="447" y2="449.5" stroke="#3a3a3a" stroke-width="1"/><line x1="516.5" x2="516.5" y1="447" y2="449.5" stroke="#3a3a3a" stroke-width="1"/><line x1="520.5" x2="520.5" y1="447" y2="451.0" stroke="#3a3a3a" stroke-width="1"/><line x1="525.5" x2="525.5" y1="447" y2="449.5" stroke="#3a3a3a" stroke-width="1"/><line x1="529.5" x2="529.5" y1="447" y2="449.5" stroke="#3a3a3a" stroke-width="1"/><line x1="534.5" x2="534.5" y1="447" y2="449.5" stroke="#3a3a3a" stroke-width="1"/><line x1="538.5" x2="538.5" y1="447" y2="449.5" stroke="#3a3a3a" stroke-width="1"/><line x1="543.5" x2="543.5" y1="447" y2="451.0" stroke="#3a3a3a" stroke-width="1"/><line x1="547.5" x2="547.5" y1="447" y2="449.5" stroke="#3a3a3a" stroke-width="1"/><line x1="552.5" x2="552.5" y1="447" y2="449.5" stroke="#3a3a3a" stroke-width="1"/><line x1="556.5" x2="556.5" y1="447" y2="449.5" stroke="#3a3a3a" stroke-width="1"/><line x1="561.5" x2="561.5" y1="447" y2="449.5" stroke="#3a3a3a" stroke-width="1"/><line x1="565.5" x2="565.5" y1="447" y2="451.0" stroke="#3a3a3a" stroke-width="1"/><line x1="570.5" x2="570.5" y1="447" y2="449.5" stroke="#3a3a3a" stroke-width="1"/><line x1="574.5" x2="574.5" y1="447" y2="449.5" stroke="#3a3a3a" stroke-width="1"/><line x1="579.5" x2="579.5" y1="447" y2="449.5" stroke="#3a3a3a" stroke-width="1"/><line x1="583.5" x2="583.5" y1="447" y2="449.5" stroke="#3a3a3a" stroke-width="1"/><line x1="588.5" x2="588.5" y1="447" y2="451.0" stroke="#3a3a3a" stroke-width="1"/><line x1="593.5" x2="593.5" y1="447" y2="449.5" stroke="#3a3a3a" stroke-width="1"/><line x1="597.5" x2="597.5" y1="447" y2="449.5" stroke="#3a3a3a" stroke-width="1"/><line x1="602.5" x2="602.5" y1="447" y2="449.5" stroke="#3a3a3a" stroke-width="1"/><line x1="606.5" x2="606.5" y1="447" y2="449.5" stroke="#3a3a3a" stroke-width="1"/><line x1="611.5" x2="611.5" y1="447" y2="451.0" stroke="#3a3a3a" stroke-width="1"/><line x1="615.5" x2="615.5" y1="447" y2="449.5" stroke="#3a3a3a" stroke-width="1"/><line x1="620.5" x2="620.5" y1="447" y2="449.5" stroke="#3a3a3a" stroke-width="1"/><line x1="624.5" x2="624.5" y1="447" y2="449.5" stroke="#3a3a3a" stroke-width="1"/><line x1="629.5" x2="629.5" y1="447" y2="449.5" stroke="#3a3a3a" stroke-width="1"/><line x1="633.5" x2="633.5" y1="447" y2="451.0" stroke="#3a3a3a" stroke-width="1"/><line x1="638.5" x2="638.5" y1="447" y2="449.5" stroke="#3a3a3a" stroke-width="1"/><line x1="642.5" x2="642.5" y1="447" y2="449.5" stroke="#3a3a3a" stroke-width="1"/><line x1="647.5" x2="647.5" y1="447" y2="449.5" stroke="#3a3a3a" stroke-width="1"/><line x1="651.5" x2="651.5" y1="447" y2="449.5" stroke="#3a3a3a" stroke-width="1"/><line x1="656.5" x2="656.5" y1="447" y2="451.0" stroke="#3a3a3a" stroke-width="1"/></svg>
<div class="btn" style="left:129px;top:437px;width:43.5px;height:28px"></div>
<div class="a" style="left:14px;top:477px;width:663px;height:3px;background:#bcbcbc"></div>
<div class="a" style="left:14px;top:480px;width:663px;height:1px;background:#4a4a4a"></div>
<div class="btn" style="left:14.0px;top:480.5px;width:74.2px;height:24.5px"></div>
<div class="btn" style="left:87.6px;top:480.5px;width:74.2px;height:24.5px"></div>
<div class="btn" style="left:161.2px;top:480.5px;width:74.2px;height:24.5px"></div>
<div class="btn" style="left:234.8px;top:480.5px;width:74.2px;height:24.5px"></div>
<div class="btn" style="left:308.4px;top:480.5px;width:74.2px;height:24.5px"></div>
<div class="btn" style="left:382.0px;top:480.5px;width:74.2px;height:24.5px"></div>
<div class="btn" style="left:455.6px;top:480.5px;width:74.2px;height:24.5px"></div>
<div class="btn" style="left:529.2px;top:480.5px;width:74.2px;height:24.5px"></div>
<div class="btn" style="left:602.8px;top:480.5px;width:74.2px;height:24.5px"></div>
<div class="a" style="left:15.5px;top:509.5px;width:661px;height:15px;box-sizing:border-box;background:#d6d6d6;border-top:2px solid #8a8a8a;border-left:2px solid #8a8a8a"></div>
<svg class="a" style="left:0;top:0;font-family:&quot;Liberation Sans&quot;,sans-serif;text-rendering:geometricPrecision" width="702" height="573" viewBox="0 0 702 573"><text transform="translate(39.00,64.50) scale(0.9200,1)" font-size="10.204" text-anchor="start" fill="#000">ASI 611A Dynamic Muscle Analysis v5.501 - C:\Users\Administrator\AppData\Local\DMCv6\Studies\MSTN ACL Study\2020-0...</text><text transform="translate(19.80,84.00) scale(0.8819,1)" font-size="10.204" text-anchor="start" fill="#000">File</text><text transform="translate(45.40,84.00) scale(0.9575,1)" font-size="10.204" text-anchor="start" fill="#000">High Throughput</text><text transform="translate(130.00,84.00) scale(0.9054,1)" font-size="10.204" text-anchor="start" fill="#000">Help</text><text transform="translate(105.60,124.70) scale(0.8928,1)" font-size="10.350" text-anchor="end" fill="#101018" stroke="#101018" stroke-width="0.15">Unfiltered Force In</text><text transform="translate(105.60,143.20) scale(0.8773,1)" font-size="10.350" text-anchor="end" fill="#101018" stroke="#101018" stroke-width="0.15">Filtered Force In</text><text transform="translate(105.60,162.20) scale(0.8824,1)" font-size="10.350" text-anchor="end" fill="#101018" stroke="#101018" stroke-width="0.15">Force Out</text><text transform="translate(105.60,253.50) scale(0.9132,1)" font-size="10.350" text-anchor="end" fill="#101018" stroke="#101018" stroke-width="0.15">Unfiltered Position In</text><text transform="translate(105.60,272.30) scale(0.9007,1)" font-size="10.350" text-anchor="end" fill="#101018" stroke="#101018" stroke-width="0.15">Filtered Position In</text><text transform="translate(105.60,291.00) scale(0.9242,1)" font-size="10.350" text-anchor="end" fill="#101018" stroke="#101018" stroke-width="0.15">Position Out</text><text transform="translate(50.00,174.80) scale(0.8678,1)" font-size="10.350" text-anchor="start" fill="#101018" stroke="#101018" stroke-width="0.15">Show Force As</text><text transform="translate(49.80,308.50) scale(0.8966,1)" font-size="10.350" text-anchor="start" fill="#101018" stroke="#101018" stroke-width="0.15">Show Position As</text><text transform="translate(99.50,192.30) scale(0.8694,1)" font-size="10.350" text-anchor="end" fill="#101018" stroke="#101018" stroke-width="0.15">Force</text><text transform="translate(99.50,205.40) scale(0.8697,1)" font-size="10.350" text-anchor="end" fill="#101018" stroke="#101018" stroke-width="0.15">F/Fref</text><text transform="translate(99.50,218.50) scale(0.8255,1)" font-size="10.350" text-anchor="end" fill="#8a8a8a" stroke="#8a8a8a" stroke-width="0.15">Stress (kPa)</text><text transform="translate(99.50,325.70) scale(0.9098,1)" font-size="10.350" text-anchor="end" fill="#101018" stroke="#101018" stroke-width="0.15">Position</text><text transform="translate(99.50,338.80) scale(0.8762,1)" font-size="10.350" text-anchor="end" fill="#101018" stroke="#101018" stroke-width="0.15">P/Pref</text><text transform="translate(99.50,351.80) scale(0.8507,1)" font-size="10.350" text-anchor="end" fill="#101018" stroke="#101018" stroke-width="0.15">Strain</text><text transform="translate(95.30,375.70) scale(0.8691,1)" font-size="10.350" text-anchor="end" fill="#101018" stroke="#101018" stroke-width="0.15">Inverted?</text><text transform="translate(77.05,404.20) scale(0.8793,1)" font-size="10.350" text-anchor="middle" fill="#101018" stroke="#101018" stroke-width="0.15">Invert Force Data</text><text transform="translate(176.10,119.10) scale(0.8300,1)" font-size="10.641" text-anchor="end" fill="#141420" stroke="#141420" stroke-width="0.15">1.6</text><text transform="translate(176.10,133.40) scale(0.8300,1)" font-size="10.641" text-anchor="end" fill="#141420" stroke="#141420" stroke-width="0.15">1.4</text><text transform="translate(176.10,148.50) scale(0.8300,1)" font-size="10.641" text-anchor="end" fill="#141420" stroke="#141420" stroke-width="0.15">1.2</text><text transform="translate(176.10,163.60) scale(0.8300,1)" font-size="10.641" text-anchor="end" fill="#141420" stroke="#141420" stroke-width="0.15">1</text><text transform="translate(176.10,177.50) scale(0.8300,1)" font-size="10.641" text-anchor="end" fill="#141420" stroke="#141420" stroke-width="0.15">0.8</text><text transform="translate(176.10,192.60) scale(0.8300,1)" font-size="10.641" text-anchor="end" fill="#141420" stroke="#141420" stroke-width="0.15">0.6</text><text transform="translate(176.10,207.50) scale(0.8300,1)" font-size="10.641" text-anchor="end" fill="#141420" stroke="#141420" stroke-width="0.15">0.4</text><text transform="translate(176.10,222.30) scale(0.8300,1)" font-size="10.641" text-anchor="end" fill="#141420" stroke="#141420" stroke-width="0.15">0.2</text><text transform="translate(176.10,236.60) scale(0.8300,1)" font-size="10.641" text-anchor="end" fill="#141420" stroke="#141420" stroke-width="0.15">0</text><text transform="translate(176.10,244.60) scale(0.8300,1)" font-size="10.641" text-anchor="end" fill="#141420" stroke="#141420" stroke-width="0.15">4</text><text transform="translate(176.10,270.30) scale(0.8300,1)" font-size="10.641" text-anchor="end" fill="#141420" stroke="#141420" stroke-width="0.15">3</text><text transform="translate(176.10,295.80) scale(0.8300,1)" font-size="10.641" text-anchor="end" fill="#141420" stroke="#141420" stroke-width="0.15">2</text><text transform="translate(176.10,320.80) scale(0.8300,1)" font-size="10.641" text-anchor="end" fill="#141420" stroke="#141420" stroke-width="0.15">1</text><text transform="translate(176.10,345.90) scale(0.8300,1)" font-size="10.641" text-anchor="end" fill="#141420" stroke="#141420" stroke-width="0.15">0</text><text transform="translate(176.10,353.40) scale(0.8300,1)" font-size="10.641" text-anchor="end" fill="#141420" stroke="#141420" stroke-width="0.15">1</text><text transform="translate(176.10,370.80) scale(0.8300,1)" font-size="10.641" text-anchor="end" fill="#141420" stroke="#141420" stroke-width="0.15">0.5</text><text transform="translate(176.10,386.90) scale(0.8300,1)" font-size="10.641" text-anchor="end" fill="#141420" stroke="#141420" stroke-width="0.15">0</text><text transform="translate(182.40,410.80) scale(0.8300,1)" font-size="10.641" text-anchor="middle" fill="#141420" stroke="#141420" stroke-width="0.15">0</text><text transform="translate(227.85,410.80) scale(0.8300,1)" font-size="10.641" text-anchor="middle" fill="#141420" stroke="#141420" stroke-width="0.15">0.05</text><text transform="translate(273.30,410.80) scale(0.8300,1)" font-size="10.641" text-anchor="middle" fill="#141420" stroke="#141420" stroke-width="0.15">0.1</text><text transform="translate(318.75,410.80) scale(0.8300,1)" font-size="10.641" text-anchor="middle" fill="#141420" stroke="#141420" stroke-width="0.15">0.15</text><text transform="translate(364.20,410.80) scale(0.8300,1)" font-size="10.641" text-anchor="middle" fill="#141420" stroke="#141420" stroke-width="0.15">0.2</text><text transform="translate(409.65,410.80) scale(0.8300,1)" font-size="10.641" text-anchor="middle" fill="#141420" stroke="#141420" stroke-width="0.15">0.25</text><text transform="translate(455.10,410.80) scale(0.8300,1)" font-size="10.641" text-anchor="middle" fill="#141420" stroke="#141420" stroke-width="0.15">0.3</text><text transform="translate(500.55,410.80) scale(0.8300,1)" font-size="10.641" text-anchor="middle" fill="#141420" stroke="#141420" stroke-width="0.15">0.35</text><text transform="translate(546.00,410.80) scale(0.8300,1)" font-size="10.641" text-anchor="middle" fill="#141420" stroke="#141420" stroke-width="0.15">0.4</text><text transform="translate(591.45,410.80) scale(0.8300,1)" font-size="10.641" text-anchor="middle" fill="#141420" stroke="#141420" stroke-width="0.15">0.45</text><text transform="translate(636.30,410.80) scale(0.7743,1)" font-size="10.641" text-anchor="middle" fill="#141420" stroke="#141420" stroke-width="0.15">0.5001</text><text transform="translate(409.60,423.70) scale(0.8817,1)" font-size="10.641" text-anchor="middle" fill="#101018" stroke="#101018" stroke-width="0.15">Time</text><text transform="translate(157.80,173.90) rotate(-90) scale(0.9349,1)" font-size="9.767" text-anchor="middle" fill="#101018" stroke="#101018" stroke-width="0.15">Force (mN-m)</text><text transform="translate(165.70,290.05) rotate(-90) scale(0.9296,1)" font-size="9.767" text-anchor="middle" fill="#101018" stroke="#101018" stroke-width="0.15">Position (&deg;)</text><text transform="translate(158.00,366.90) rotate(-90) scale(0.9687,1)" font-size="9.767" text-anchor="middle" fill="#101018" stroke="#101018" stroke-width="0.15">Stimulation</text><text transform="translate(184.40,459.20) scale(0.9300,1)" font-size="9.184" text-anchor="middle" fill="#141420" stroke="#141420" stroke-width="0.15">0</text><text transform="translate(206.98,459.20) scale(0.9300,1)" font-size="9.184" text-anchor="middle" fill="#141420" stroke="#141420" stroke-width="0.15">10</text><text transform="translate(229.56,459.20) scale(0.9300,1)" font-size="9.184" text-anchor="middle" fill="#141420" stroke="#141420" stroke-width="0.15">20</text><text transform="translate(252.14,459.20) scale(0.9300,1)" font-size="9.184" text-anchor="middle" fill="#141420" stroke="#141420" stroke-width="0.15">30</text><text transform="translate(274.72,459.20) scale(0.9300,1)" font-size="9.184" text-anchor="middle" fill="#141420" stroke="#141420" stroke-width="0.15">40</text><text transform="translate(297.30,459.20) scale(0.9300,1)" font-size="9.184" text-anchor="middle" fill="#141420" stroke="#141420" stroke-width="0.15">50</text><text transform="translate(319.88,459.20) scale(0.9300,1)" font-size="9.184" text-anchor="middle" fill="#141420" stroke="#141420" stroke-width="0.15">60</text><text transform="translate(342.46,459.20) scale(0.9300,1)" font-size="9.184" text-anchor="middle" fill="#141420" stroke="#141420" stroke-width="0.15">70</text><text transform="translate(365.04,459.20) scale(0.9300,1)" font-size="9.184" text-anchor="middle" fill="#141420" stroke="#141420" stroke-width="0.15">80</text><text transform="translate(387.62,459.20) scale(0.9300,1)" font-size="9.184" text-anchor="middle" fill="#141420" stroke="#141420" stroke-width="0.15">90</text><text transform="translate(410.20,459.20) scale(0.9300,1)" font-size="9.184" text-anchor="middle" fill="#141420" stroke="#141420" stroke-width="0.15">100</text><text transform="translate(430.50,459.20) scale(0.9300,1)" font-size="9.184" text-anchor="middle" fill="#141420" stroke="#141420" stroke-width="0.15">0</text><text transform="translate(453.07,459.20) scale(0.9300,1)" font-size="9.184" text-anchor="middle" fill="#141420" stroke="#141420" stroke-width="0.15">10</text><text transform="translate(475.64,459.20) scale(0.9300,1)" font-size="9.184" text-anchor="middle" fill="#141420" stroke="#141420" stroke-width="0.15">20</text><text transform="translate(498.21,459.20) scale(0.9300,1)" font-size="9.184" text-anchor="middle" fill="#141420" stroke="#141420" stroke-width="0.15">30</text><text transform="translate(520.78,459.20) scale(0.9300,1)" font-size="9.184" text-anchor="middle" fill="#141420" stroke="#141420" stroke-width="0.15">40</text><text transform="translate(543.35,459.20) scale(0.9300,1)" font-size="9.184" text-anchor="middle" fill="#141420" stroke="#141420" stroke-width="0.15">50</text><text transform="translate(565.92,459.20) scale(0.9300,1)" font-size="9.184" text-anchor="middle" fill="#141420" stroke="#141420" stroke-width="0.15">60</text><text transform="translate(588.49,459.20) scale(0.9300,1)" font-size="9.184" text-anchor="middle" fill="#141420" stroke="#141420" stroke-width="0.15">70</text><text transform="translate(611.06,459.20) scale(0.9300,1)" font-size="9.184" text-anchor="middle" fill="#141420" stroke="#141420" stroke-width="0.15">80</text><text transform="translate(633.63,459.20) scale(0.9300,1)" font-size="9.184" text-anchor="middle" fill="#141420" stroke="#141420" stroke-width="0.15">90</text><text transform="translate(656.20,459.20) scale(0.9300,1)" font-size="9.184" text-anchor="middle" fill="#141420" stroke="#141420" stroke-width="0.15">100</text><text transform="translate(294.10,466.30) scale(1.0110,1)" font-size="6.706" text-anchor="middle" fill="#141420" stroke="#141420" stroke-width="0.15">Time Displayed (% Test Length)</text><text transform="translate(535.70,466.30) scale(1.0457,1)" font-size="6.706" text-anchor="middle" fill="#141420" stroke="#141420" stroke-width="0.15">Offset (% Test Length)</text><text transform="translate(149.80,454.80) scale(0.8952,1)" font-size="10.350" text-anchor="middle" fill="#101018" stroke="#101018" stroke-width="0.15">Unzoom</text><text transform="translate(50.50,497.00) scale(0.8510,1)" font-size="10.641" text-anchor="middle" fill="#101018" stroke="#101018" stroke-width="0.15">Open Data File</text><text transform="translate(122.50,490.50) scale(0.8631,1)" font-size="10.496" text-anchor="middle" fill="#101018" stroke="#101018" stroke-width="0.15">Get Data From</text><text transform="translate(122.90,501.90) scale(0.8738,1)" font-size="10.496" text-anchor="middle" fill="#101018" stroke="#101018" stroke-width="0.15">LabBook Study</text><text transform="translate(196.40,497.00) scale(0.8454,1)" font-size="10.641" text-anchor="middle" fill="#101018" stroke="#101018" stroke-width="0.15">Filter Setup</text><text transform="translate(270.30,497.00) scale(0.9070,1)" font-size="10.641" text-anchor="middle" fill="#101018" stroke="#101018" stroke-width="0.15">Normalization</text><text transform="translate(345.00,497.00) scale(0.8719,1)" font-size="10.641" text-anchor="middle" fill="#101018" stroke="#101018" stroke-width="0.15">Muscle Analysis</text><text transform="translate(419.70,497.00) scale(0.8857,1)" font-size="10.641" text-anchor="middle" fill="#101018" stroke="#101018" stroke-width="0.15">Work Loop</text><text transform="translate(493.75,497.00) scale(0.8774,1)" font-size="10.641" text-anchor="middle" fill="#101018" stroke="#101018" stroke-width="0.15">Time Derivative</text><text transform="translate(566.35,497.00) scale(0.8818,1)" font-size="10.641" text-anchor="middle" fill="#101018" stroke="#101018" stroke-width="0.15">Line Fitting</text><text transform="translate(640.00,497.00) scale(0.8383,1)" font-size="10.641" text-anchor="middle" fill="#101018" stroke="#101018" stroke-width="0.15">Export Data</text><text transform="translate(19.60,519.85) scale(0.9478,1)" font-size="9.985" text-anchor="start" fill="#101018" stroke="#101018" stroke-width="0.15">File opened from: C:\Users\Administrator\AppData\Local\DMCv6\Studies\MSTN ACL Study\2020-09-30\91R\Sample 1\122433-Twitch-DMCv6_Twitch-</text></svg>
</body></html>
